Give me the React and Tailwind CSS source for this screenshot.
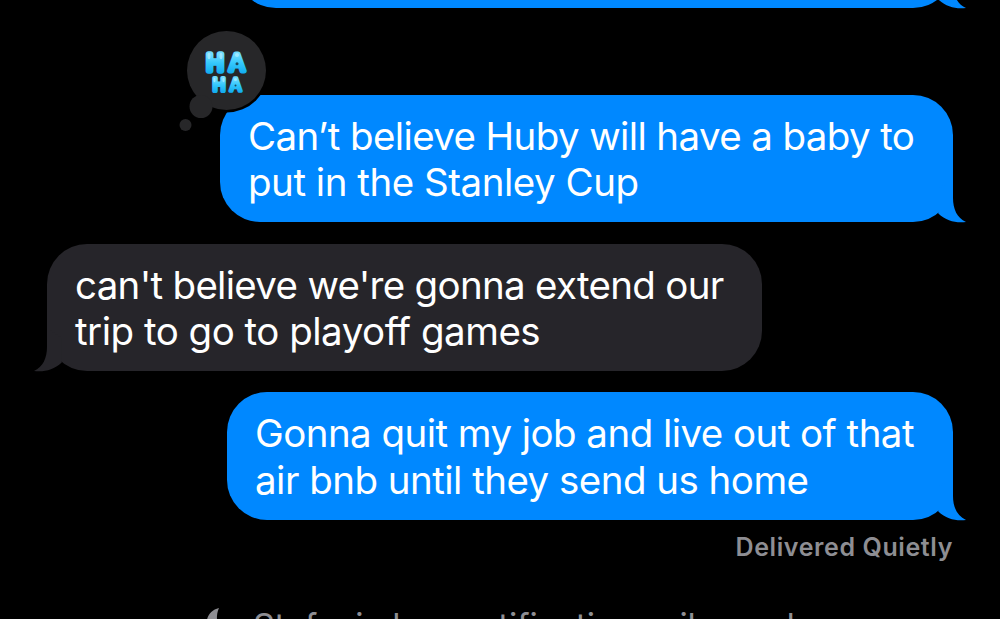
import React from "react";
import clsx from "clsx";

const Tail = ({ side }) => (
  <svg
    viewBox="0 0 30 44"
    className={clsx(
      "absolute bottom-[-1px] h-[44px] w-[30px]",
      side === "right"
        ? "right-[-13px] fill-[#0088ff]"
        : "left-[-13px] -scale-x-100 fill-[#26252a]"
    )}
  >
    <path d="M17 0V19C17 30 21 39 30 43C20 44.300 10.500 42 2.300 34.500V10Z" />
  </svg>
);

const Bubble = ({ side, className, children }) => (
  <div
    className={clsx(
      "relative rounded-[40px] pt-[18px] text-[38.5px] whitespace-nowrap text-white",
      side === "right" ? "self-end bg-[#0088ff]" : "self-start bg-[#26252a]",
      className
    )}
  >
    {children}
    <Tail side={side} />
  </div>
);

const HahaReaction = () => (
  <svg
    viewBox="0 0 90 106"
    className="absolute top-[-67px] left-[-43px] h-[106px] w-[90px]"
  >
    <defs>
      <linearGradient id="haha" x1="0" y1="0" x2="0" y2="1">
        <stop offset="0.2" stopColor="#6fdcff" />
        <stop offset="0.5" stopColor="#35c8fc" />
        <stop offset="0.85" stopColor="#14aef0" />
      </linearGradient>
    </defs>
    <circle cx="49.500" cy="42.500" r="42" fill="#000" />
    <circle cx="49.500" cy="42.500" r="39.500" fill="#272729" />
    <circle cx="24" cy="78.500" r="11.500" fill="#272729" />
    <circle cx="8.500" cy="97" r="6" fill="#272729" />
    <g
      className="font-['Inter',sans-serif] font-normal tracking-normal"
      fill="url(#haha)"
      stroke="url(#haha)"
      strokeLinejoin="round"
      textAnchor="middle"
    >
      <text x="38" y="43" fontSize="23" strokeWidth="5.600">H</text>
      <text x="60" y="43" fontSize="23" strokeWidth="5">A</text>
      <text x="42" y="62.800" fontSize="17" strokeWidth="4">H</text>
      <text x="58.500" y="62.800" fontSize="17" strokeWidth="3.600">A</text>
    </g>
    <g fill="#b5efff" opacity="0.7">
      <ellipse cx="32" cy="28" rx="1.500" ry="3.200" />
      <ellipse cx="44" cy="28" rx="1.500" ry="3.200" />
      <ellipse cx="60" cy="27" rx="2" ry="2" />
      <ellipse cx="37.500" cy="52" rx="1.100" ry="2.200" />
      <ellipse cx="46.500" cy="52" rx="1.100" ry="2.200" />
      <ellipse cx="58.500" cy="51.500" rx="1.500" ry="1.500" />
    </g>
    <g fill="#1d4a5f">
      <circle cx="60" cy="35.800" r="1.500" />
      <circle cx="58.500" cy="57.600" r="1" />
    </g>
  </svg>
);

const App = () => {
  return (
    <main className="flex h-[619px] w-[1000px] flex-col overflow-hidden bg-black pr-[47px] pl-[47px] font-['Inter',sans-serif]">
      <Bubble side="right" className="-mt-[119px] h-[127px] w-[717px] shrink-0" />

      <Bubble side="right" className="mt-[87px] h-[127px] w-[733px] shrink-0 pl-[28px] leading-[46px]">
        <p className="tracking-[-0.62px]">Can’t believe Huby will have a baby to</p>
        <p className="tracking-[-0.48px]">put in the Stanley Cup</p>
        <HahaReaction />
      </Bubble>

      <Bubble side="left" className="mt-[22px] h-[127px] w-[715px] shrink-0 pl-[28px] leading-[46px]">
        <p className="tracking-[-0.7px]">can't believe we're gonna extend our</p>
        <p className="tracking-[-0.5px]">trip to go to playoff games</p>
      </Bubble>

      <Bubble side="right" className="mt-[21px] h-[128px] w-[726px] shrink-0 pl-[28px] leading-[46.5px]">
        <p className="tracking-[-0.55px]">Gonna quit my job and live out of that</p>
        <p className="tracking-[-0.53px]">air bnb until they send us home</p>
      </Bubble>

      <p className="mt-[11px] self-end text-[25px] leading-[32px] font-semibold tracking-[0.6px] whitespace-nowrap text-[#8e8e93]">
        Delivered Quietly
      </p>

      <div className="mt-[39px] flex shrink-0 items-start pl-[158px] text-[#8e8e93]">
        <svg viewBox="0 0 32 32" className="mt-[6px] h-8 w-8 fill-current">
          <path d="M14 0C6 2 1.500 8 1.500 16C1.500 25 8 31 17 31C23 31 28 28 30 23C20 26 11 18 12 8C12.200 5 13 2 14 0Z" />
        </svg>
        <p className="mt-px ml-[16px] text-[34px] leading-[46px] tracking-[-0.22px] whitespace-nowrap">
          Stefanie has notifications silenced
        </p>
      </div>
    </main>
  );
};

export default App;
